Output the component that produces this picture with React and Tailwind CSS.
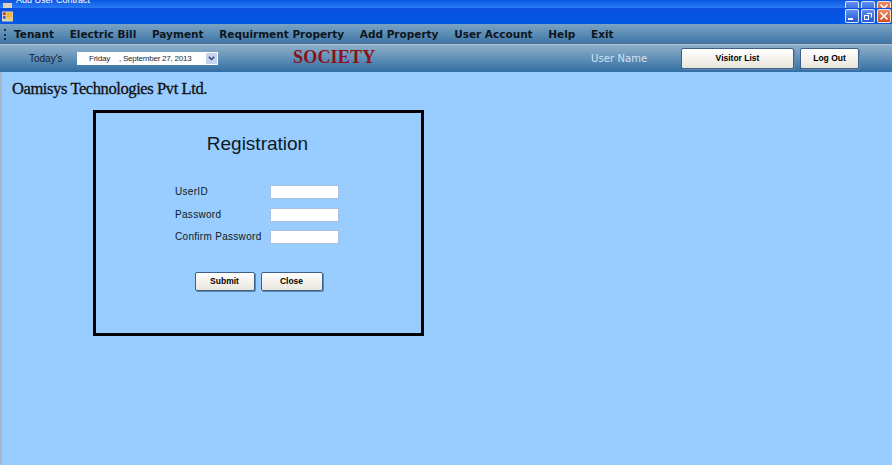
import React from "react";

const sans = "font-['Liberation_Sans',sans-serif]";
const menu = ["Tenant", "Electric Bill", "Payment", "Requirment Property", "Add Property", "User Account", "Help", "Exit"];

function WinBtn({ kind, className = "" }) {
  const red = kind === "close";
  return (
    <div className={`w-[14px] h-[14px] rounded-[2px] border border-white/80 flex items-center justify-center ${red ? "bg-gradient-to-b from-[#e88a68] to-[#cf4a22]" : "bg-gradient-to-b from-[#5f8ff0] to-[#2456d0]"} ${className}`}>
      <svg width="10" height="10" viewBox="0 0 10 10">
        {kind === "min" && <rect x="1" y="7" width="5" height="2" fill="#fff" />}
        {kind === "max" && (
          <g fill="none" stroke="#fff" strokeWidth="1">
            <rect x="1.5" y="4.5" width="4" height="4" />
            <path d="M4 2.5h4.500v4" />
          </g>
        )}
        {kind === "close" && <path d="M1.500 1.500l7 7M8.500 1.500l-7 7" stroke="#fff" strokeWidth="1.600" />}
      </svg>
    </div>
  );
}

function AppIcon() {
  return (
    <svg width="11" height="11" viewBox="0 0 12 11" className="shrink-0">
      <rect width="12" height="11" fill="#d9d3c0" />
      <rect x="5" y="1" width="6" height="6" fill="#f2b632" />
      <rect x="1" y="1" width="3" height="3" fill="#c43b2a" />
      <rect x="1" y="5" width="3" height="3" fill="#3a66c4" />
      <rect x="5" y="7" width="6" height="3" fill="#e3d27a" />
    </svg>
  );
}

function Field() {
  return <input type="text" className="w-[69px] h-[14px] bg-white border border-[#a9c1de] outline-none" />;
}

function Row({ label, className = "" }) {
  return (
    <div className={`flex items-center ${className}`}>
      <span className={`w-[95px] text-[10px] leading-[14px] text-[#0d1a26] tracking-[0.3px] whitespace-nowrap ${sans}`}>{label}</span>
      <Field />
    </div>
  );
}

function Btn({ children, className = "" }) {
  return (
    <button className={`rounded-[2px] border border-[#3f6187] bg-gradient-to-b from-white to-[#e9e6dc] text-[8.500px] font-bold text-black flex items-center justify-center shadow-[1px_1px_0_#5f86ad] ${sans} ${className}`}>
      {children}
    </button>
  );
}

export default function App() {
  return (
    <div className="w-[892px] h-[465px] overflow-hidden flex flex-col bg-[#99ccff]">
      {/* stacked window title bars */}
      <div className="h-[8px] shrink-0 overflow-hidden bg-gradient-to-b from-[#0a55e0] to-[#2a7cf5] flex justify-between">
        <div className="flex items-start gap-[4px] pl-[3px]">
          <div className="w-[9px] h-[5px] mt-[3px] bg-[#d9d3c0]" />
          <span className={`-mt-[5px] text-[9px] leading-[11px] text-white ${sans}`}>Add User Contract</span>
        </div>
        <div className="flex gap-[2px] pr-[1px] pt-[1px]">
          <WinBtn kind="none" />
          <WinBtn kind="none" />
          <WinBtn kind="close" />
        </div>
      </div>
      <div className="h-[16px] shrink-0 bg-gradient-to-b from-[#0a4fe0] to-[#0458e6] flex items-center justify-between pl-[2px] pr-[1px]">
        <AppIcon />
        <div className="flex gap-[2px]">
          <WinBtn kind="min" />
          <WinBtn kind="max" />
          <WinBtn kind="close" />
        </div>
      </div>

      {/* menu bar */}
      <div className="h-[20px] shrink-0 bg-gradient-to-b from-[#7aa3c4] to-[#3f77a6] flex items-center pl-[4px] pt-[1px] border-b border-[#4a6f90]">
        <div className="w-[2px] h-[11px] mr-[8px] border-l-2 border-dotted border-[#1f2f3f]" />
        <div className="flex gap-[15.700px] text-[10.500px] leading-none font-bold text-[#0d1620] font-['DejaVu_Sans',sans-serif]">
          {menu.map((m) => (
            <span key={m}>{m}</span>
          ))}
        </div>
      </div>

      {/* tool bar */}
      <div className="h-[28px] shrink-0 border-t border-[#a9bfd2] bg-gradient-to-b from-[#8fb0ca] to-[#2f6ea3] flex items-center">
        <span className={`ml-[29px] w-[48px] text-[10px] text-[#10202f] ${sans}`}>Today's</span>
        <div className={`w-[141px] h-[13px] bg-white flex items-center pl-[12px] pr-[1px] text-[8px] tracking-[-0.22px] text-[#1a2a3a] ${sans}`}>
          <span>Friday</span>
          <span className="ml-[9px]">, September 27, 2013</span>
          <div className="ml-auto w-[11px] h-[11px] bg-[#c5d3ee] flex items-center justify-center">
            <svg width="7" height="5" viewBox="0 0 7 5"><path d="M.8.800l2.700 2.700L6.200.800" fill="none" stroke="#33407a" strokeWidth="1.500" /></svg>
          </div>
        </div>
        <span className="ml-[75px] mb-[3px] w-[298px] text-[18px] leading-none font-bold tracking-[0.2px] text-[#8b1018] font-['Liberation_Serif',serif]">SOCIETY</span>
        <span className="w-[90px] text-[10px] tracking-[0.1px] font-medium text-[#d5e2ee] font-['DejaVu_Sans',sans-serif] whitespace-nowrap">User Name</span>
        <Btn className="w-[113px] h-[21px] mr-[6px]">Visitor List</Btn>
        <Btn className="w-[59px] h-[21px]">Log Out</Btn>
      </div>

      {/* content */}
      <main className="flex-1 min-h-0 border-l-2 border-[#a9b8c6] pt-[6px]">
        <h1 className="pl-[10px] text-[16.500px] leading-[22px] font-medium text-[#101010] tracking-[-0.4px] whitespace-nowrap font-['Liberation_Serif',serif] [-webkit-text-stroke:0.3px_#101010]">
          Oamisys Technologies Pvt Ltd.
        </h1>
        <section className="ml-[91px] mt-[10px] w-[331px] h-[226px] border-[3px] border-black flex flex-col items-center">
          <h2 className={`mt-[20px] ml-[-2px] text-[19px] leading-[22px] text-[#0d1a26] ${sans}`}>Registration</h2>
          <div className="mt-[30px] ml-[-3px] flex flex-col">
            <Row label="UserID" />
            <Row label="Password" className="mt-[9px]" />
            <Row label="Confirm Password" className="mt-[8px]" />
          </div>
          <div className="mt-[28px] flex gap-[6px]">
            <Btn className="w-[60px] h-[19px]">Submit</Btn>
            <Btn className="w-[62px] h-[19px]">Close</Btn>
          </div>
        </section>
      </main>
    </div>
  );
}
